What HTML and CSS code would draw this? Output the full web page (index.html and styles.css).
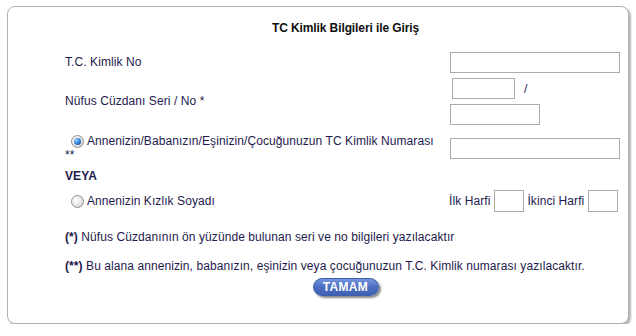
FILE: index.html
```html
<!DOCTYPE html>
<html lang="tr">
<head>
<meta charset="utf-8">
<title>TC Kimlik Bilgileri ile Giriş</title>
<link rel="stylesheet" href="styles.css">
</head>
<body>
<div class="panel">
  <div class="content">
    <div class="title">TC Kimlik Bilgileri ile Giriş</div>

    <div class="row row1">
      <div class="label">T.C. Kimlik No</div>
      <div class="field"><input class="txt w170" type="text"></div>
    </div>

    <div class="row row2">
      <div class="label">Nüfus Cüzdanı Seri / No *</div>
      <div class="field stack">
        <div class="seri"><input class="txt w63" type="text"><span class="slash">/</span></div>
        <input class="txt w90" type="text">
      </div>
    </div>

    <div class="row row3">
      <div class="label top">
        <div class="radioline"><span class="radio checked"></span><span>Annenizin/Babanızın/Eşinizin/Çocuğunuzun TC Kimlik Numarası</span></div>
        <div class="stars">**</div>
      </div>
      <div class="field"><input class="txt w170" type="text"></div>
    </div>

    <div class="veya">VEYA</div>

    <div class="row row4">
      <div class="label">
        <div class="radioline"><span class="radio"></span><span>Annenizin Kızlık Soyadı</span></div>
      </div>
      <div class="field harf">
        <span>İlk Harfi</span><input class="txt box" type="text"><span>İkinci Harfi</span><input class="txt box" type="text">
      </div>
    </div>

    <p class="note n1"><b>(*)</b> Nüfus Cüzdanının ön yüzünde bulunan seri ve no bilgileri yazılacaktır</p>
    <p class="note n2"><b>(**)</b> Bu alana annenizin, babanızın, eşinizin veya çocuğunuzun T.C. Kimlik numarası yazılacaktır.</p>

    <div class="actions"><button class="btn" type="button">TAMAM</button></div>
  </div>
</div>
</body>
</html>
```

FILE: styles.css
```css
html, body {
  margin: 0;
  padding: 0;
  background: #ffffff;
}

body {
  font-family: "Liberation Sans", Arial, sans-serif;
  font-size: 12px;
  letter-spacing: 0.08px;
  color: #1e1a4c;
}

.panel {
  margin: 6px 0 0 7px;
  width: 620px;
  height: 316px;
  border: 1px solid #b2b2b2;
  border-radius: 8px;
  box-shadow: 2px 2px 2px #b8b8b8;
  background: #fff;
}

.content {
  margin-left: 57px;
  width: 561px;
  padding-top: 14px;
}

.title {
  text-align: center;
  font-weight: bold;
  letter-spacing: -0.1px;
  line-height: 14px;
  height: 14px;
  color: #111;
}

.row {
  display: flex;
  align-items: center;
}

.label {
  width: 385px;
  flex: none;
  line-height: 13px;
}

.label.top {
  align-self: flex-start;
  padding-top: 1px;
}

.field {
  flex: none;
}

.row1 { margin-top: 17px; }
.row2 { margin-top: 5px; }
.row3 { margin-top: 9px; }
.row4 { margin-top: 7px; }

.stack {
  display: flex;
  flex-direction: column;
  gap: 5px;
}

.seri {
  display: flex;
  align-items: center;
  padding-left: 2px;
}

.slash {
  margin-left: 9px;
}

.txt {
  box-sizing: border-box;
  height: 21px;
  border: 1px solid #ababab;
  background: #fff;
  margin: 0;
  padding: 0 2px;
  font: inherit;
  display: block;
}

.w170 { width: 170px; }
.w63 { width: 63px; }
.w90 { width: 90px; }

.radioline {
  display: flex;
  align-items: center;
}

.radio {
  box-sizing: border-box;
  width: 13px;
  height: 13px;
  margin-left: 6px;
  margin-right: 3px;
  border-radius: 50%;
  border: 1px solid #8f8f8f;
  background: radial-gradient(circle at 35% 35%, #ffffff 0%, #e6e6e6 55%, #c8c8c8 100%);
  flex: none;
  position: relative;
}

.radio.checked::after {
  content: "";
  position: absolute;
  left: 2px;
  top: 2px;
  width: 7px;
  height: 7px;
  border-radius: 50%;
  background: radial-gradient(circle at 35% 35%, #9fd0ff 0%, #2f7fd8 50%, #10407a 100%);
}

.stars {
  margin-top: 1px;
}

.veya {
  margin-top: 7px;
  font-weight: bold;
  line-height: 14px;
  height: 14px;
}

.harf {
  display: flex;
  align-items: center;
  margin-left: -1px;
}

.txt.box {
  width: 30px;
  height: 22px;
  margin: 0 3px 0 4px;
}

.note {
  margin: 0;
  line-height: 14px;
}

.n1 { margin-top: 18px; }
.n2 { margin-top: 15px; }

.actions {
  display: flex;
  justify-content: center;
  margin-top: 5px;
}

.btn {
  box-sizing: border-box;
  width: 66px;
  height: 18px;
  padding: 0;
  border: 1px solid #3d5ea8;
  border-radius: 9px;
  background: linear-gradient(#7595dd, #4c6fc2 50%, #3f60b2);
  box-shadow: 2px 2px 2px rgba(60, 60, 60, 0.6);
  color: #fff;
  font-family: "Liberation Sans", Arial, sans-serif;
  font-weight: bold;
  font-size: 12px;
  line-height: 16px;
  letter-spacing: 0.3px;
}
```
